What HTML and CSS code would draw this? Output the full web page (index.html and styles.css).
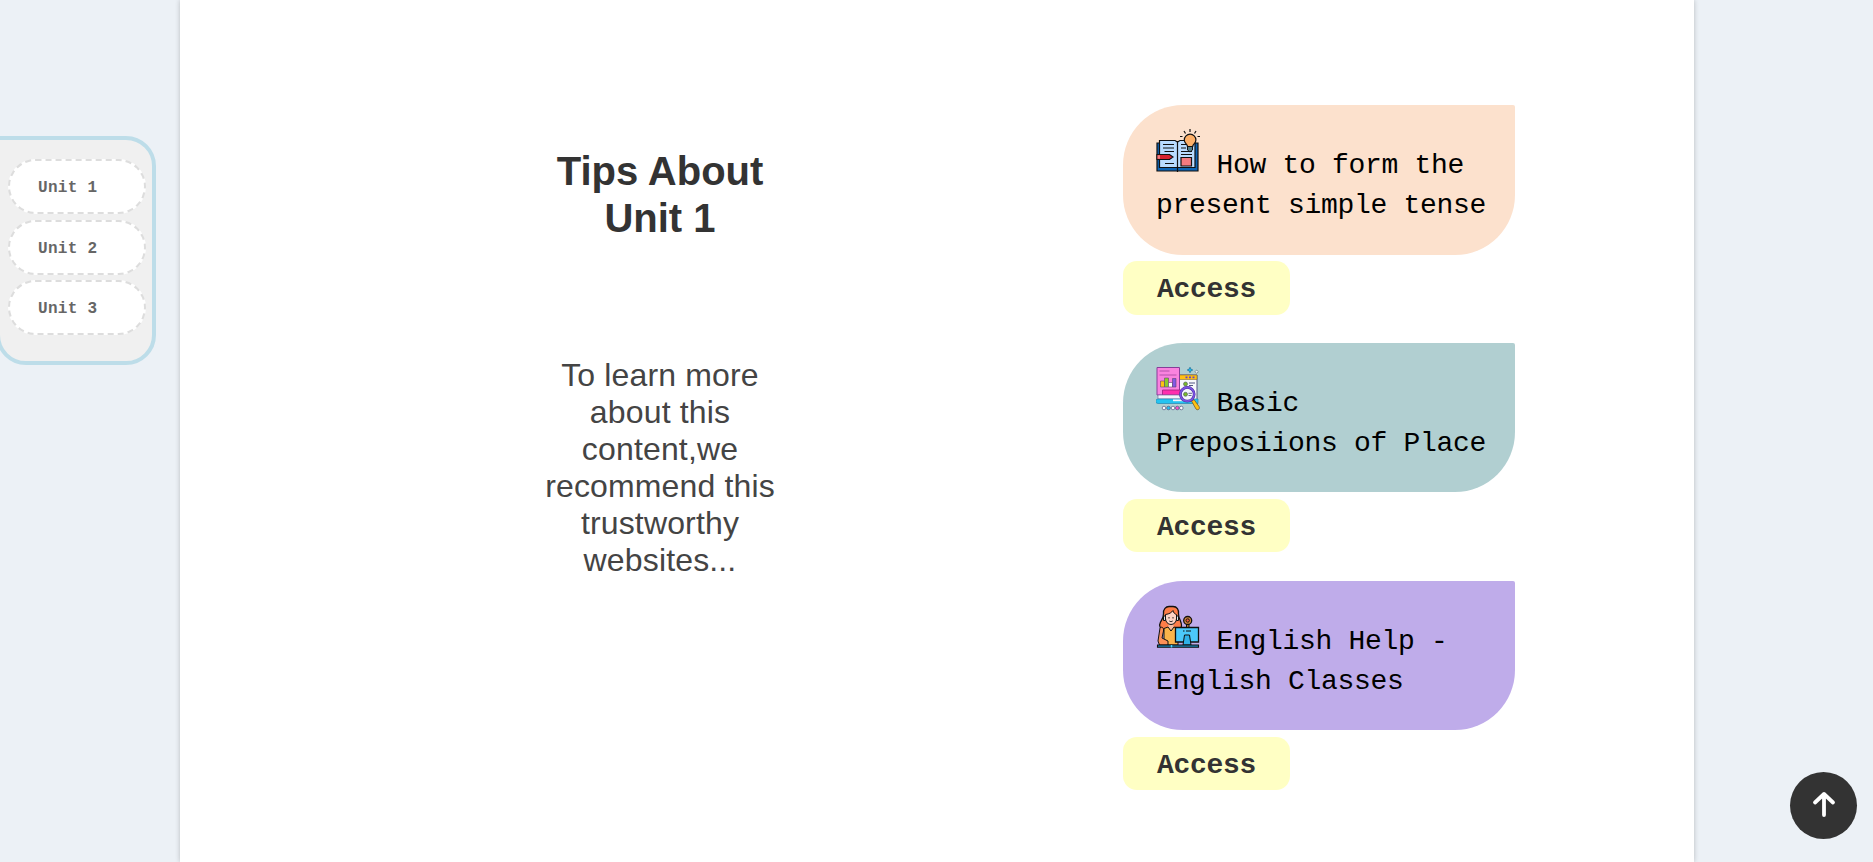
FILE: index.html
```html
<!DOCTYPE html>
<html lang="en">
<head>
<meta charset="utf-8">
<title>Tips About Unit 1</title>
<link rel="stylesheet" href="styles.css">
</head>
<body>
<nav class="units">
  <a class="unit">Unit 1</a>
  <a class="unit">Unit 2</a>
  <a class="unit">Unit 3</a>
</nav>
<main class="page">
  <section class="intro">
    <h1 class="title">Tips About<br>Unit 1</h1>
    <p class="lead">To learn more<br>about this<br>content,we<br>recommend this<br>trustworthy<br>websites...</p>
  </section>
  <section class="links">
    <article class="item">
      <div class="card peach"><svg class="icon" viewBox="0 0 44 44">
        <path d="M1 14h41v28H1z" fill="#0c63b4" stroke="#111" stroke-width="1.2"/>
        <path d="M3.500 11.500H19l2.500 1.500 2.500-1.500H39V38.500H3.500z" fill="#b9dcff" stroke="#111" stroke-width="1.200"/>
        <path d="M21.500 12v31M7 15.500h11M7 19h11M8.500 22.500H18M9 34.500h9M25 15.500h5M25 19h5M25 22.500h11M25 25.500h11" stroke="#111" stroke-width="1.200"/>
        <path d="M25 28.500h10.500V37H25z" fill="#f47b80" stroke="#111" stroke-width="1.200"/>
        <path d="M1 25.500h12.500l3.500 2.500-3.500 2.500H1z" fill="#d8232f" stroke="#111" stroke-width="1.200"/>
        <path d="M1.500 26.200H4v3.600H1.500z" fill="#f47b80"/>
        <path d="M31.500 17h5v4l-2.500 2-2.500-2z" fill="#557d87" stroke="#111"/>
        <path d="M31.500 17.500c0-2.500-3.200-3-3.200-6.500a5.800 5.800 0 0 1 11.600 0c0 3.500-3.200 4-3.200 6.500z" fill="#fdb069" stroke="#111" stroke-width="1.200"/>
        <path d="M34 0v3M28 2l1.500 2.500M40 2l-1.500 2.500M24 7.500h2.500M41.500 7.500H44" stroke="#111" stroke-width="1.200"/>
      </svg> How to form the<br>present simple tense</div>
      <a class="access">Access</a>
    </article>
    <article class="item">
      <div class="card teal"><svg class="icon" viewBox="0 0 44 44">
        <path d="M23 8h18v27H23z" fill="#f7f8fb" stroke="#535582"/>
        <path d="M23 8h18v4.500H23z" fill="#ffc112" stroke="#8a6a31" stroke-width=".6"/>
        <path d="M29.500 10.300h2M33 10.300h2M36.500 10.300h2" stroke="#6a42c7" stroke-width="1.800"/>
        <circle cx="29.500" cy="17" r="2" fill="#78b928" stroke="#4e5269" stroke-width=".6"/>
        <path d="M33 16h6M33 18.500h4" stroke="#535582"/>
        <path d="M1 .5h22.500V28H1z" fill="#fa83df" stroke="#873d99"/>
        <path d="M3.500 4h10M3.500 8h17" stroke="#a5489f" stroke-width=".8"/>
        <path d="M4.500 14h4v6h-4z" fill="#ffc112" stroke="#5b4770" stroke-width=".6"/>
        <path d="M8.500 11h4v9h-4z" fill="#8acb2d" stroke="#5b4770" stroke-width=".6"/>
        <path d="M12.500 15.500h4V20h-4z" fill="#fff" stroke="#5b4770" stroke-width=".6"/>
        <path d="M16.500 11.500h3.500V20h-3.500z" fill="#8258e4" stroke="#5b4770" stroke-width=".6"/>
        <path d="M6.500 23H30v5H6.500z" fill="#ff2fae" stroke="#9c1f7d" stroke-width=".8"/>
        <path d="M2 28h26v4H2z" fill="#f5f4fa" stroke="#7a6ba0" stroke-width=".7"/>
        <path d="M2 32h40v4.500H2a2.200 2.200 0 0 1 0-4.500z" fill="#25c4f1" stroke="#2787b0" stroke-width=".7"/>
        <path d="M17 32.500h12v1.700H17z" fill="#f5f4fa"/>
        <path d="m35.500 34 2.500-1.500 5 7c1.500 2.500-1.500 4.500-3 2.500z" fill="#ffc112" stroke="#79592c" stroke-width=".8"/>
        <circle cx="31.300" cy="27.300" r="6.900" fill="#f4f4fd" stroke="#4b2c9d" stroke-width="2.700"/>
        <circle cx="31.300" cy="27.300" r="6.900" fill="none" stroke="#7b51e3" stroke-width="1.700"/>
        <circle cx="29.500" cy="27.300" r="2" fill="#78b928" stroke="#4e5269" stroke-width=".6"/>
        <path d="M32.500 26.300H36M32.500 28.500h3" stroke="#535582" stroke-width=".9"/>
        <path d="m34 .2.900 1.900 1.900.9-1.900.9-.9 1.900-.9-1.900-1.900-.9 1.900-.9z" fill="#1fbbed" stroke="#286f95" stroke-width=".7"/>
        <path d="m40.700 3 1.700 1.700-1.700 1.700L39 4.700z" fill="#edf5f7" stroke="#5f7083" stroke-width=".7"/>
        <g stroke="#535582" stroke-width=".7"><circle cx="8" cy="41" r="1.800" fill="#fff"/><circle cx="12.500" cy="41" r="1.800" fill="#25c4f1"/><circle cx="17" cy="41" r="1.800" fill="#fff"/><circle cx="21.300" cy="41" r="1.800" fill="#fa52ca"/><circle cx="25.300" cy="41" r="1.800" fill="#fff"/></g>
      </svg> Basic<br>Preposiions of Place</div>
      <a class="access">Access</a>
    </article>
    <article class="item">
      <div class="card violet"><svg class="icon" viewBox="0 0 44 44">
        <path d="M7.500 9C7 4 10 1.500 13 1.500h4c4 0 6 3 5.500 7.500 0 5 3.500 8 3 12-.5 3-2.500 4-5 4H9c-5-.5-6.500-4-4.500-8 2-3 3-4 3-8z" fill="#fd7d48" stroke="#111" stroke-width="1.300"/>
        <path d="M12.500 17h5v6l-2.500 3-2.500-3z" fill="#f7bba0"/>
        <path d="M8 23.500 12 22l3 4 3-4 4 1.500V40H8z" fill="#fbb44a" stroke="#111" stroke-width="1"/>
        <path d="M4 23c2-2 4 0 3.500 3L6 33l6 3v4H3.500L2 36z" fill="#fd9158" stroke="#111" stroke-width="1"/>
        <path d="M9.500 9.500c4-.5 6-2 7.500-4 .5 2 1.500 3.500 3.500 4v4c0 3.500-2.500 6-5.500 6s-5.500-2.500-5.500-6z" fill="#fcd3c5" stroke="#111" stroke-width="1"/>
        <path d="M7.500 11h2v4.500h-2zM20.500 11h2v4.500h-2z" fill="#d9e6ef" stroke="#111"/>
        <path d="M13 12v1.500M17 12v1.500M13.300 16c1 .8 2.500.8 3.400 0" stroke="#111" stroke-width=".9" fill="none"/>
        <path d="M30.500 19h2.500v4h-2.500z" fill="#d18a37" stroke="#111"/>
        <circle cx="31.700" cy="15.500" r="4" fill="#d4863a" stroke="#111" stroke-width="1.300"/>
        <circle cx="31.700" cy="15.500" r="1.700" fill="#f55939" stroke="#111"/>
        <path d="M19.500 22.500h23V37h-23z" fill="#4cc9fb" stroke="#111" stroke-width="1.300"/>
        <path d="M27 26h1.500M30 26h5" stroke="#111" stroke-width="1.200"/>
        <path d="m28.500 30h5l1.500 10h-8z" fill="#2fb2ea" stroke="#111" stroke-width="1"/>
        <path d="M1.500 40h41v2.300h-41z" fill="#1a83b5" stroke="#111" stroke-width="1.100"/>
        <path d="M15.500 40v2.500" stroke="#49d4fc" stroke-width="1.500"/>
      </svg> English Help -<br>English Classes</div>
      <a class="access">Access</a>
    </article>
  </section>
</main>
<a class="to-top"><svg class="arrow" viewBox="0 0 24 26"><path d="M12 24V3M3 11.500 12 3l9 8.500" fill="none" stroke="#fff" stroke-width="3.800" stroke-linecap="round" stroke-linejoin="round"/></svg></a>
</body>
</html>
```
FILE: styles.css
```css
* { box-sizing: border-box; }

body {
  margin: 0;
  height: 862px;
  overflow: hidden;
  background: #ecf1f6;
  font-family: "Liberation Sans", Arial, sans-serif;
}

.page {
  display: grid;
  grid-template-columns: 392px 392px;
  column-gap: 159px;
  justify-content: end;
  width: 1514px;
  height: 862px;
  margin-left: 180px;
  padding: 105px 179px 0 0;
  background: #fff;
  box-shadow: 0 0 5px rgba(0, 0, 0, .22);
}

.intro {
  width: 260px;
  margin-left: -42px;
  text-align: center;
}

.title {
  margin: 43px 0 0;
  color: #333;
  font-size: 40px;
  line-height: 47px;
}

.lead {
  margin: 115px 0 0;
  color: #444;
  font-size: 32px;
  line-height: 37px;
  letter-spacing: .15px;
}

.links {
  display: flex;
  flex-direction: column;
  gap: 28px;
}

.item {
  display: flex;
  flex-direction: column;
  align-items: flex-start;
  gap: 6.500px;
  height: 209.800px;
}

.card {
  width: 392px;
  height: 149.500px;
  padding: 24px 0 0 33px;
  border-radius: 60px 2px 60px 60px;
  color: #000;
  font: 28px/40px "Liberation Mono", monospace;
  letter-spacing: -.3px;
  white-space: nowrap;
}

.peach { background: #fce1cd; }
.teal { background: #b1cfd1; }
.violet { background: #bfacea; }

.icon {
  width: 44px;
  height: 44px;
  vertical-align: baseline;
}

.access {
  width: 167px;
  height: 53.500px;
  padding: 2px 0 0 34px;
  border-radius: 14px;
  background: #ffffc4;
  color: #333;
  font: bold 28px/53px "Liberation Mono", monospace;
  letter-spacing: -.3px;
}

.units {
  position: absolute;
  top: 136px;
  left: -4px;
  display: flex;
  flex-direction: column;
  gap: 5.500px;
  width: 160px;
  height: 229px;
  padding: 19px 6px 0 8px;
  border: 4px solid #bddde9;
  border-radius: 0 30px 30px 30px;
  background: #f0f0f0;
}

.unit {
  width: 138px;
  height: 55px;
  padding: 2px 0 0 28px;
  border: 2px dashed #ddd;
  border-radius: 30px;
  background: #fff;
  color: #666;
  font: bold 16px/51px "Liberation Mono", monospace;
  letter-spacing: .3px;
}

.to-top {
  position: absolute;
  top: 772px;
  left: 1790px;
  display: flex;
  align-items: center;
  justify-content: center;
  width: 67px;
  height: 67px;
  border-radius: 50%;
  background: #333;
}

.arrow {
  width: 24px;
  height: 26px;
  margin-bottom: 3px;
}
```
